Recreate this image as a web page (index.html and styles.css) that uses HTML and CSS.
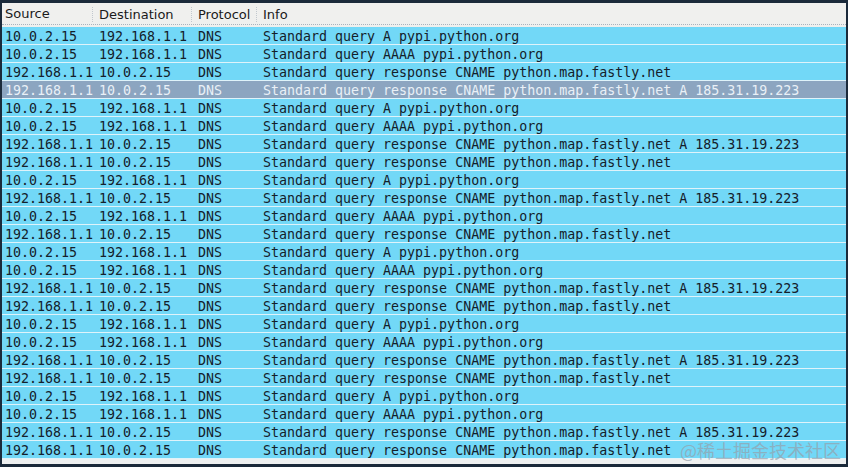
FILE: index.html
```html
<!DOCTYPE html>
<html>
<head>
<meta charset="utf-8">
<link rel="stylesheet" href="styles.css">
</head>
<body>
<div class="frame">
  <div class="table">
    <div class="head">
      <div class="hc c1">Source</div>
      <div class="hc c2">Destination</div>
      <div class="hc c3">Protocol</div>
      <div class="hc c4">Info</div>
    </div>
    <div class="rows">
      <div class="row"><span class="c1">10.0.2.15</span><span class="c2">192.168.1.1</span><span class="c3">DNS</span><span class="c4">Standard query A pypi.python.org</span></div>
      <div class="row"><span class="c1">10.0.2.15</span><span class="c2">192.168.1.1</span><span class="c3">DNS</span><span class="c4">Standard query AAAA pypi.python.org</span></div>
      <div class="row"><span class="c1">192.168.1.1</span><span class="c2">10.0.2.15</span><span class="c3">DNS</span><span class="c4">Standard query response CNAME python.map.fastly.net</span></div>
      <div class="row sel"><span class="c1">192.168.1.1</span><span class="c2">10.0.2.15</span><span class="c3">DNS</span><span class="c4">Standard query response CNAME python.map.fastly.net A 185.31.19.223</span></div>
      <div class="row"><span class="c1">10.0.2.15</span><span class="c2">192.168.1.1</span><span class="c3">DNS</span><span class="c4">Standard query A pypi.python.org</span></div>
      <div class="row"><span class="c1">10.0.2.15</span><span class="c2">192.168.1.1</span><span class="c3">DNS</span><span class="c4">Standard query AAAA pypi.python.org</span></div>
      <div class="row"><span class="c1">192.168.1.1</span><span class="c2">10.0.2.15</span><span class="c3">DNS</span><span class="c4">Standard query response CNAME python.map.fastly.net A 185.31.19.223</span></div>
      <div class="row"><span class="c1">192.168.1.1</span><span class="c2">10.0.2.15</span><span class="c3">DNS</span><span class="c4">Standard query response CNAME python.map.fastly.net</span></div>
      <div class="row"><span class="c1">10.0.2.15</span><span class="c2">192.168.1.1</span><span class="c3">DNS</span><span class="c4">Standard query A pypi.python.org</span></div>
      <div class="row"><span class="c1">192.168.1.1</span><span class="c2">10.0.2.15</span><span class="c3">DNS</span><span class="c4">Standard query response CNAME python.map.fastly.net A 185.31.19.223</span></div>
      <div class="row"><span class="c1">10.0.2.15</span><span class="c2">192.168.1.1</span><span class="c3">DNS</span><span class="c4">Standard query AAAA pypi.python.org</span></div>
      <div class="row"><span class="c1">192.168.1.1</span><span class="c2">10.0.2.15</span><span class="c3">DNS</span><span class="c4">Standard query response CNAME python.map.fastly.net</span></div>
      <div class="row"><span class="c1">10.0.2.15</span><span class="c2">192.168.1.1</span><span class="c3">DNS</span><span class="c4">Standard query A pypi.python.org</span></div>
      <div class="row"><span class="c1">10.0.2.15</span><span class="c2">192.168.1.1</span><span class="c3">DNS</span><span class="c4">Standard query AAAA pypi.python.org</span></div>
      <div class="row"><span class="c1">192.168.1.1</span><span class="c2">10.0.2.15</span><span class="c3">DNS</span><span class="c4">Standard query response CNAME python.map.fastly.net A 185.31.19.223</span></div>
      <div class="row"><span class="c1">192.168.1.1</span><span class="c2">10.0.2.15</span><span class="c3">DNS</span><span class="c4">Standard query response CNAME python.map.fastly.net</span></div>
      <div class="row"><span class="c1">10.0.2.15</span><span class="c2">192.168.1.1</span><span class="c3">DNS</span><span class="c4">Standard query A pypi.python.org</span></div>
      <div class="row"><span class="c1">10.0.2.15</span><span class="c2">192.168.1.1</span><span class="c3">DNS</span><span class="c4">Standard query AAAA pypi.python.org</span></div>
      <div class="row"><span class="c1">192.168.1.1</span><span class="c2">10.0.2.15</span><span class="c3">DNS</span><span class="c4">Standard query response CNAME python.map.fastly.net A 185.31.19.223</span></div>
      <div class="row"><span class="c1">192.168.1.1</span><span class="c2">10.0.2.15</span><span class="c3">DNS</span><span class="c4">Standard query response CNAME python.map.fastly.net</span></div>
      <div class="row"><span class="c1">10.0.2.15</span><span class="c2">192.168.1.1</span><span class="c3">DNS</span><span class="c4">Standard query A pypi.python.org</span></div>
      <div class="row"><span class="c1">10.0.2.15</span><span class="c2">192.168.1.1</span><span class="c3">DNS</span><span class="c4">Standard query AAAA pypi.python.org</span></div>
      <div class="row"><span class="c1">192.168.1.1</span><span class="c2">10.0.2.15</span><span class="c3">DNS</span><span class="c4">Standard query response CNAME python.map.fastly.net A 185.31.19.223</span></div>
      <div class="row"><span class="c1">192.168.1.1</span><span class="c2">10.0.2.15</span><span class="c3">DNS</span><span class="c4">Standard query response CNAME python.map.fastly.net</span></div>
    </div>
    <div class="foot"></div>
    <div class="watermark">@稀土掘金技术社区</div>
  </div>
</div>
</body>
</html>
```

FILE: styles.css
```css
html, body {
  margin: 0;
  padding: 0;
  background: #1b2a3a;
}
.frame {
  width: 848px;
  height: 467px;
  box-sizing: border-box;
  padding: 3px 2px 3px 2px;
  background: #1b2a3a;
}
.table {
  position: relative;
  height: 100%;
  background: #f0f0ee;
  display: flex;
  flex-direction: column;
  overflow: hidden;
}
.head {
  display: grid;
  grid-template-columns: 91px 99px 65px 1fr;
  height: 21px;
  border-bottom: 1px dotted #a9b3bd;
  margin-bottom: 2px;
  font-family: "DejaVu Sans", sans-serif;
  font-size: 13px;
  line-height: 22px;
  color: #1a1a1a;
  align-items: center;
}
.hc {
  padding-left: 6px;
  white-space: nowrap;
}
.hc.c1 {
  padding-left: 3px;
}
.hc.c2, .hc.c3, .hc.c4 {
  border-left: 1px dotted #c2c8ce;
  line-height: 14px;
  padding-top: 1px;
  margin-left: -1px;
}
.rows {
  display: flex;
  flex-direction: column;
}
.row {
  display: grid;
  grid-template-columns: 91px 99px 65px 1fr;
  height: 17px;
  border-bottom: 1px solid #dff3fa;
  background: #72d8f7;
  font-family: "DejaVu Sans Mono", monospace;
  font-size: 13.3px;
  line-height: 19px;
  color: #14202a;
  white-space: nowrap;
}
.row span {
  padding-left: 6px;
  height: 17px;
  overflow: visible;
}
.row span.c1 {
  padding-left: 3px;
}
.row.sel {
  background: #8ca5c0;
  color: #e9f0f7;
}
.foot {
  flex: 1;
  background: #eef0f0;
}
.watermark {
  position: absolute;
  right: 5px;
  bottom: 4px;
  font-family: "Noto Sans CJK SC", sans-serif;
  font-size: 18px;
  line-height: 20px;
  color: rgba(150, 160, 170, 0.7);
  white-space: nowrap;
}
```
